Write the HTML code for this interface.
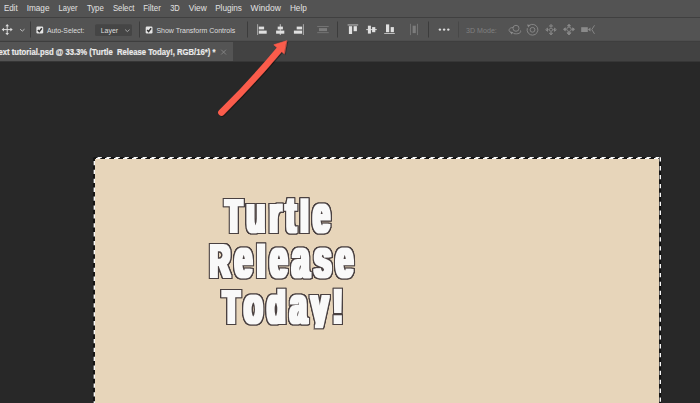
<!DOCTYPE html>
<html><head><meta charset="utf-8">
<style>
html,body{margin:0;padding:0;background:#282828;}
body{width:700px;height:403px;overflow:hidden;}
svg{display:block;}
text{font-family:"Liberation Sans",sans-serif;}
</style></head><body>
<svg width="700" height="403" viewBox="0 0 700 403">
<defs>
<filter id="ash" x="-20%" y="-20%" width="140%" height="140%"><feDropShadow dx="0.8" dy="0.8" stdDeviation="0.7" flood-color="#000" flood-opacity="0.55"/></filter>
<filter id="ol" filterUnits="userSpaceOnUse" x="190" y="180" width="190" height="170" color-interpolation-filters="sRGB">
  <feMorphology in="SourceAlpha" operator="dilate" radius="3 2" result="d2"/>
  <feGaussianBlur in="d2" stdDeviation="0.4" result="d2b"/>
  <feComponentTransfer in="d2b" result="d2c"><feFuncA type="linear" slope="1.7" intercept="0"/></feComponentTransfer>
  <feFlood flood-color="#4a4141"/><feComposite in2="d2c" operator="in" result="dark"/>
  <feMorphology in="SourceAlpha" operator="dilate" radius="2 1" result="d1"/>
  <feFlood flood-color="#f9f9f9"/><feComposite in2="d1" operator="in" result="white"/>
  <feMerge><feMergeNode in="dark"/><feMergeNode in="white"/></feMerge>
</filter>
<clipPath id="c1"><rect x="190" y="199.3" width="200" height="40"/></clipPath>
<clipPath id="c2"><rect x="190" y="244.5" width="200" height="40"/></clipPath>
<clipPath id="c3"><rect x="190" y="289.7" width="200" height="37.5"/></clipPath>
</defs>
<!-- backgrounds -->
<rect x="0" y="0" width="700" height="403" fill="#282828"/>
<rect x="0" y="0" width="700" height="17" fill="#535353"/>
<rect x="0" y="17" width="700" height="1" fill="#404040"/>
<rect x="0" y="18" width="700" height="23" fill="#535353"/>
<rect x="0" y="41" width="700" height="20.6" fill="#424242"/>
<rect x="0" y="40.8" width="700" height="1" fill="#3e3e3e"/>
<rect x="0" y="42" width="233" height="19" fill="#545454"/>

<!-- menu bar -->
<g font-size="9" fill="#e2e2e2">
<text x="3.9" y="11" textLength="13.7" lengthAdjust="spacingAndGlyphs">Edit</text>
<text x="26.7" y="11" textLength="22.8" lengthAdjust="spacingAndGlyphs">Image</text>
<text x="58.5" y="11" textLength="19" lengthAdjust="spacingAndGlyphs">Layer</text>
<text x="86.9" y="11" textLength="16.8" lengthAdjust="spacingAndGlyphs">Type</text>
<text x="112.9" y="11" textLength="21.6" lengthAdjust="spacingAndGlyphs">Select</text>
<text x="143.2" y="11" textLength="17.6" lengthAdjust="spacingAndGlyphs">Filter</text>
<text x="170.2" y="11" textLength="9.6" lengthAdjust="spacingAndGlyphs">3D</text>
<text x="188.8" y="11" textLength="18" lengthAdjust="spacingAndGlyphs">View</text>
<text x="215.2" y="11" textLength="26.7" lengthAdjust="spacingAndGlyphs">Plugins</text>
<text x="250.6" y="11" textLength="30.3" lengthAdjust="spacingAndGlyphs">Window</text>
<text x="289.9" y="11" textLength="16.9" lengthAdjust="spacingAndGlyphs">Help</text>
</g>

<!-- options bar separators -->
<g fill="#3c3c3c">
<rect x="30" y="21.5" width="1" height="16"/>
<rect x="139" y="21.5" width="1" height="16"/>
<rect x="247" y="21.5" width="1" height="16"/>
<rect x="337" y="21.5" width="1" height="16"/>
<rect x="428" y="21.5" width="1" height="16"/>
<rect x="458" y="21.5" width="1" height="16" fill="#484848"/>
</g>

<!-- move tool icon -->
<g stroke="#dcdcdc" stroke-width="1" fill="#dcdcdc" stroke-linecap="butt">
<line x1="7.2" y1="25.5" x2="7.2" y2="33.7"/>
<line x1="3" y1="29.6" x2="11.4" y2="29.6"/>
<polygon points="7.2,24 5.4,26.3 9,26.3" stroke="none"/>
<polygon points="7.2,35.2 5.4,32.9 9,32.9" stroke="none"/>
<polygon points="1.7,29.6 4,27.8 4,31.4" stroke="none"/>
<polygon points="12.7,29.6 10.4,27.8 10.4,31.4" stroke="none"/>
</g>
<polyline points="20.1,29.2 22.3,31.1 24.5,29.2" fill="none" stroke="#bdbdbd" stroke-width="1"/>

<!-- checkboxes -->
<g>
<rect x="36.4" y="26.6" width="6.8" height="6.8" rx="1.2" fill="#e6e6e6"/>
<polyline points="37.9,30 39.3,31.6 41.8,28.2" fill="none" stroke="#333" stroke-width="1.5"/>
<rect x="145.7" y="26.6" width="6.8" height="6.8" rx="1.2" fill="#e6e6e6"/>
<polyline points="147.2,30 148.6,31.6 151.1,28.2" fill="none" stroke="#333" stroke-width="1.5"/>
</g>

<!-- dropdown -->
<rect x="95" y="24.3" width="37" height="11.7" rx="1.5" fill="#454545"/>
<polyline points="125.2,29.6 127.4,31.6 129.6,29.6" fill="none" stroke="#b0b0b0" stroke-width="0.9"/>

<!-- options text -->
<g font-size="7.6" fill="#dedede">
<text x="46.9" y="32.7" textLength="37.4" lengthAdjust="spacingAndGlyphs">Auto-Select:</text>
<text x="100.7" y="32.7" textLength="17.4" lengthAdjust="spacingAndGlyphs">Layer</text>
<text x="156.4" y="32.7" textLength="78.9" lengthAdjust="spacingAndGlyphs">Show Transform Controls</text>
<text x="466.1" y="32.7" textLength="30.7" lengthAdjust="spacingAndGlyphs" fill="#808080">3D Mode:</text>
</g>

<!-- align icons group 1 -->
<g fill="#e0e0e0">
<rect x="257.2" y="24.2" width="0.9" height="10.8" fill="#b4b4b4"/>
<rect x="258.8" y="26.6" width="5.3" height="2.8"/>
<rect x="258.8" y="30.6" width="7.9" height="3.1"/>

<rect x="279.8" y="24.2" width="0.9" height="10.8" fill="#d0d0d0"/>
<rect x="277.7" y="26.6" width="5.2" height="2.8"/>
<rect x="276.1" y="30.6" width="8.2" height="3.1"/>

<rect x="302.9" y="24.2" width="0.9" height="10.8" fill="#b4b4b4"/>
<rect x="296.7" y="26.6" width="5.4" height="2.8"/>
<rect x="293.9" y="30.6" width="8.2" height="3.1"/>
</g>
<g fill="#7c7c7c">
<rect x="317.2" y="26.2" width="11.5" height="0.8"/>
<rect x="319" y="28.1" width="8" height="3"/>
<rect x="317.2" y="32.3" width="11.5" height="0.8"/>
</g>

<!-- align icons group 2 -->
<g fill="#e0e0e0">
<rect x="347.6" y="24.5" width="10.6" height="0.9" fill="#c8c8c8"/>
<rect x="348.9" y="26.2" width="3.2" height="7.8"/>
<rect x="353.6" y="26.2" width="3.3" height="5"/>

<rect x="366.2" y="29.2" width="10.6" height="0.9"/>
<rect x="367.9" y="25.7" width="3" height="7.9"/>
<rect x="372.1" y="27.1" width="3.2" height="5.1"/>

<rect x="384.2" y="33" width="10.6" height="0.9" fill="#c8c8c8"/>
<rect x="386" y="24.4" width="3.2" height="7.8"/>
<rect x="390.7" y="27.1" width="3.2" height="5.1"/>
</g>
<g fill="#7c7c7c">
<rect x="410.2" y="23.8" width="0.8" height="11.3"/>
<rect x="417.2" y="23.8" width="0.8" height="11.3"/>
<rect x="412.6" y="25.7" width="3.2" height="7.4"/>
</g>
<g fill="#dcdcdc">
<circle cx="439.9" cy="29.6" r="1.2"/><circle cx="444.1" cy="29.6" r="1.2"/><circle cx="448.3" cy="29.6" r="1.2"/>
</g>

<!-- 3D mode icons (dim) -->
<g fill="none" stroke="#8a8a8a" stroke-width="0.9">
 <!-- orbit -->
 <circle cx="516" cy="28.3" r="3"/>
 <path d="M513 27.5 C509 27.5 507.5 31 511 32.5 M513.5 33.5 C518 34.5 521.5 33 520.5 30.5"/>
 <polygon points="510,31.5 513.5,32.2 511.5,34.5" fill="#8a8a8a" stroke="none"/>
 <!-- roll -->
 <circle cx="532.5" cy="29.8" r="2.4"/>
 <path d="M529 25.6 A5.4 5.4 0 1 1 527.3 28.2"/>
 <polygon points="527,24.6 530.3,25 528.3,27.6" fill="#8a8a8a" stroke="none"/>
 <!-- pan -->
 <circle cx="551" cy="29.7" r="1.6"/>
 <path d="M551 25.5 V27.5 M551 31.9 V33.9 M546.8 29.7 H548.8 M553.2 29.7 H555.2"/>
 <path d="M549.4 26.2 L551 24.4 L552.6 26.2 Z M549.4 33.2 L551 35 L552.6 33.2 Z M547.5 28.1 L545.7 29.7 L547.5 31.3 Z M554.5 28.1 L556.3 29.7 L554.5 31.3 Z"/>
 <!-- slide -->
 <circle cx="569" cy="29.3" r="2.2"/>
 <path d="M569 25 V27 M564.6 29.3 H566.6 M571.4 29.3 H573.4 M569 31.6 V33"/>
 <path d="M567.5 26 L569 24.2 L570.5 26 Z M565.3 27.8 L563.5 29.3 L565.3 30.8 Z M572.7 27.8 L574.5 29.3 L572.7 30.8 Z" fill="#8a8a8a"/>
 <path d="M567 32.8 H571 L569 35 Z" fill="#8a8a8a"/>
 <!-- camera -->
 <rect x="581.2" y="27.2" width="6.6" height="4.8" fill="#8a8a8a" stroke="none"/>
 <polygon points="587.8,29.6 590.5,27.6 590.5,31.6" fill="#8a8a8a" stroke="none"/>
 <polyline points="594.5,25.3 591.8,29.6 594.5,33.9"/>
</g>

<!-- tab -->
<text x="-1.5" y="55.1" font-size="9.2" font-weight="bold" fill="#ebebeb" stroke="#ebebeb" stroke-width="0.2" textLength="217" lengthAdjust="spacingAndGlyphs">ext tutorial.psd @ 33.3% (Turtle&#160; Release Today!, RGB/16*) *</text>
<path d="M221.2 49.7 L226 54.5 M226 49.7 L221.2 54.5" stroke="#8c8c8c" stroke-width="0.8" fill="none"/>

<!-- document -->
<rect x="94.8" y="158.4" width="564.4" height="250" fill="#e7d5ba"/>
<g fill="none">
<path d="M93.4 157.5L661 157.5" stroke="#fafafa" stroke-width="1"/><path d="M93.4 157.5L661 157.5" stroke="#161616" stroke-width="1" stroke-dasharray="4.7 4.3" stroke-dashoffset="0.6"/>
<path d="M93.4 158.5L661 158.5" stroke="#fafafa" stroke-width="1"/><path d="M93.4 158.5L661 158.5" stroke="#161616" stroke-width="1" stroke-dasharray="4.7 4.3" stroke-dashoffset="2.1"/>
<path d="M93.9 157.2V410" stroke="#141414" stroke-width="2"/><path d="M94.3 157V410" stroke="#f8f8f8" stroke-width="1.4" stroke-dasharray="4.3 4.6" stroke-dashoffset="5"/>
<path d="M660.1 157.2V410" stroke="#141414" stroke-width="2.2"/><path d="M660.3 157V410" stroke="#f8f8f8" stroke-width="1.4" stroke-dasharray="4.3 4.6" stroke-dashoffset="8.7"/>
</g>

<!-- headline -->
<g filter="url(#ol)" font-weight="bold" font-size="51.5" text-anchor="middle" letter-spacing="7.5" fill="#000">
  <g clip-path="url(#c1)"><text transform="translate(279.9,232.1) scale(0.59,1)"><tspan font-size="46">T</tspan>urtle</text></g>
  <g clip-path="url(#c2)"><text transform="translate(283.9,277.3) scale(0.608,1)"><tspan font-size="46">R</tspan>elease</text></g>
  <g clip-path="url(#c3)"><text transform="translate(285.1,322.6) scale(0.59,1)"><tspan font-size="46">T</tspan>oday!</text></g>
</g>

<!-- arrow -->
<g filter="url(#ash)" fill="#fa5b4c" stroke="#fa5b4c" stroke-linejoin="round" stroke-linecap="round">
 <path d="M221.3 112.6 Q251.9 82.5 280.2 48.6" fill="none" stroke-width="6.4"/>
 <path d="M286.5 40.8 L273.8 44.8 L284 53.5 Z" stroke-width="0.6"/>
</g>
</svg>
</body></html>
